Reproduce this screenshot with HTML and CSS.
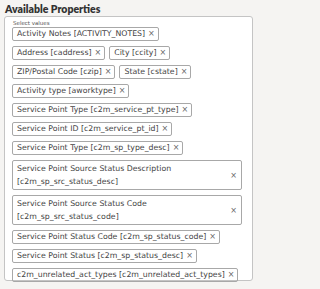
FILE: index.html
```html
<!DOCTYPE html>
<html>
<head>
<meta charset="utf-8">
<link rel="stylesheet" href="styles.css">
</head>
<body>
<div class="page">
  <h2 class="title">Available Properties</h2>
  <div class="box">
    <div class="label">Select values</div>
    <div class="chips">
      <span class="chip"><span class="txt">Activity Notes [ACTIVITY_NOTES]</span><span class="x">×</span></span>
      <span class="chip"><span class="txt">Address [caddress]</span><span class="x">×</span></span>
      <span class="chip"><span class="txt">City [ccity]</span><span class="x">×</span></span>
      <span class="chip"><span class="txt">ZIP/Postal Code [czip]</span><span class="x">×</span></span>
      <span class="chip"><span class="txt">State [cstate]</span><span class="x">×</span></span>
      <span class="chip"><span class="txt">Activity type [aworktype]</span><span class="x">×</span></span>
      <span class="chip"><span class="txt">Service Point Type [c2m_service_pt_type]</span><span class="x">×</span></span>
      <span class="chip"><span class="txt">Service Point ID [c2m_service_pt_id]</span><span class="x">×</span></span>
      <span class="chip"><span class="txt">Service Point Type [c2m_sp_type_desc]</span><span class="x">×</span></span>
      <span class="chip wide"><span class="txt">Service Point Source Status Description [c2m_sp_src_status_desc]</span><span class="x">×</span></span>
      <span class="chip wide"><span class="txt">Service Point Source Status Code [c2m_sp_src_status_code]</span><span class="x">×</span></span>
      <span class="chip"><span class="txt">Service Point Status Code [c2m_sp_status_code]</span><span class="x">×</span></span>
      <span class="chip"><span class="txt">Service Point Status [c2m_sp_status_desc]</span><span class="x">×</span></span>
      <span class="chip"><span class="txt">c2m_unrelated_act_types [c2m_unrelated_act_types]</span><span class="x">×</span></span>
    </div>
  </div>
</div>
</body>
</html>
```
FILE: styles.css
```css
html, body {
  margin: 0;
  padding: 0;
  background: #f5f4f2;
}
.page {
  width: 264px;
  height: 289px;
  padding: 3px 0 0 4px;
  box-sizing: border-box;
  font-family: "DejaVu Sans", sans-serif;
  color: #3a3a3a;
}
.title {
  margin: 0 0 1px 1px;
  font-family: Lato, "DejaVu Sans", sans-serif;
  font-size: 10.5px;
  line-height: 12px;
  font-weight: 800;
  color: #333;
}
.box {
  width: 249px;
  height: 265px;
  box-sizing: border-box;
  background: #fff;
  border: 1px solid #c4c4c4;
  border-radius: 3px;
  padding: 3px 10px 0 7px;
}
.label {
  font-size: 5.5px;
  line-height: 7px;
  color: #555;
  margin-left: 1px;
}
.chips {
  display: flex;
  flex-wrap: wrap;
  column-gap: 4px;
  row-gap: 5px;
}
.chip {
  display: inline-flex;
  align-items: center;
  box-sizing: border-box;
  min-height: 14px;
  border: 1px solid #a8a8a8;
  border-radius: 2px;
  padding: 0 3px 0 4px;
  font-size: 7.8px;
  line-height: 12px;
  color: #444;
  max-width: 100%;
}
.chip.wide {
  width: 100%;
  padding-top: 1px;
  padding-bottom: 1px;
  padding-right: 4px;
  line-height: 13px;
}
.txt {
  flex: 1 1 auto;
}
.x {
  flex: none;
  margin-left: 3px;
  font-size: 8px;
  color: #666;
}
```
